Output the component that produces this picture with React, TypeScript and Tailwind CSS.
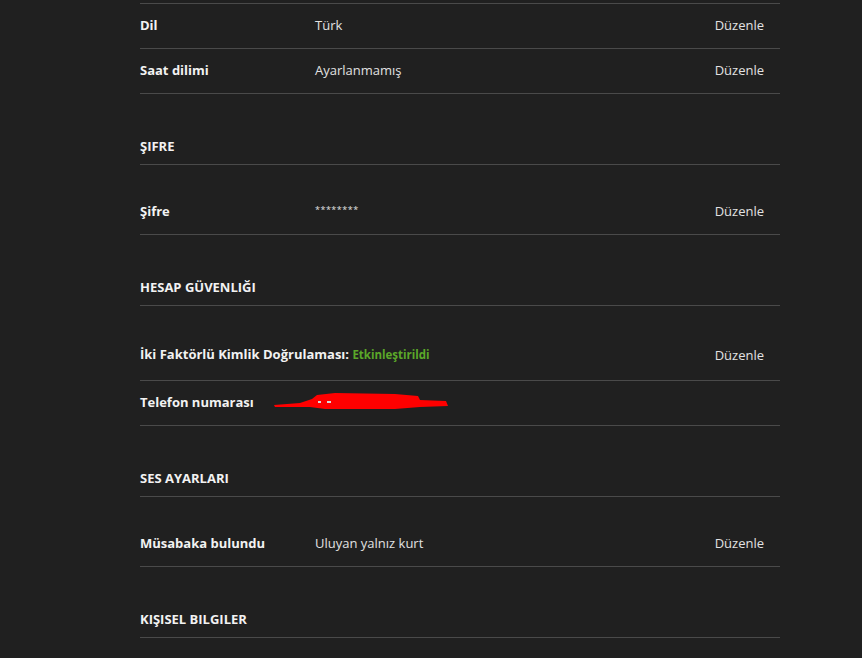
import type { ReactNode } from "react";

// ─── Rows ─────────────────────────────────────────────────────────────────────

function SectionHeader({ title }: { title: string }) {
  return (
    <div className="flex h-[71px] items-end border-b border-[#4a4a4a] pb-[9px]">
      <span className="text-[13px] font-bold uppercase leading-[18px] text-[#f2f2f2]">
        {title}
      </span>
    </div>
  );
}

function SettingRow({
  label,
  value,
  edit = true,
  tall = false,
  children,
}: {
  label: ReactNode;
  value?: ReactNode;
  edit?: boolean;
  tall?: boolean;
  children?: ReactNode;
}) {
  return (
    <div
      className={`relative flex items-center border-b border-[#4a4a4a] pb-[2px] pr-4 text-[13px] leading-[18px] ${
        tall ? "h-[50px]" : "h-[45px]"
      }`}
    >
      <div className="w-[175px] shrink-0 font-bold text-[#f2f2f2]">{label}</div>
      <div className="flex-1 text-[#e2e2e2]">{value}</div>
      {edit && <button className="text-[#e2e2e2]">Düzenle</button>}
      {children}
    </div>
  );
}

// redaction scribble over the phone number
function Scribble() {
  return (
    <svg
      className="absolute left-[130px] top-[10px]"
      width="182"
      height="20"
      viewBox="0 0 182 20"
    >
      <path
        d="M4 14 L30 12 L42 8 L47 4 L65 2 L125 3 L148 5 L150 9 L176 10 L178 15 L150 16 L125 18 L55 18 L40 16 L5 16 Z"
        fill="#ff0000"
      />
      <rect x="48" y="10" width="3" height="2" fill="#d8d8d8" />
      <rect x="57" y="10" width="4" height="2" fill="#d8d8d8" />
    </svg>
  );
}

export default function App() {
  return (
    <div
      className="min-h-screen bg-[#202020]"
      style={{ fontFamily: '"Open Sans", "Liberation Sans", sans-serif' }}
    >
      <div className="ml-[140px] w-[640px]">
        <div className="h-[4px] border-b border-[#4a4a4a]" />

        <SettingRow label="Dil" value="Türk" />
        <SettingRow label="Saat dilimi" value="Ayarlanmamış" />

        <SectionHeader title="Şifre" />
        <div className="h-[25px]" />
        <SettingRow
          label="Şifre"
          value={<span className="relative -top-[2px] text-[9px] tracking-[0.5px]">********</span>}
        />

        <SectionHeader title="Hesap Güvenliği" />
        <div className="h-[25px]" />
        <SettingRow
          tall
          label={
            <span className="whitespace-nowrap">
              İki Faktörlü Kimlik Doğrulaması:{" "}
              <span className="text-[11.5px] text-[#5ba829]">Etkinleştirildi</span>
            </span>
          }
        />
        <SettingRow label="Telefon numarası" edit={false}>
          <Scribble />
        </SettingRow>

        <SectionHeader title="Ses Ayarları" />
        <div className="h-[25px]" />
        <SettingRow label="Müsabaka bulundu" value="Uluyan yalnız kurt" />

        <div className="flex h-[71px] items-end border-b border-[#4a4a4a] pb-[9px]">
          <span className="text-[13px] font-bold leading-[18px] text-[#f2f2f2]">
            KIŞISEL BILGILER
          </span>
        </div>
      </div>
    </div>
  );
}
